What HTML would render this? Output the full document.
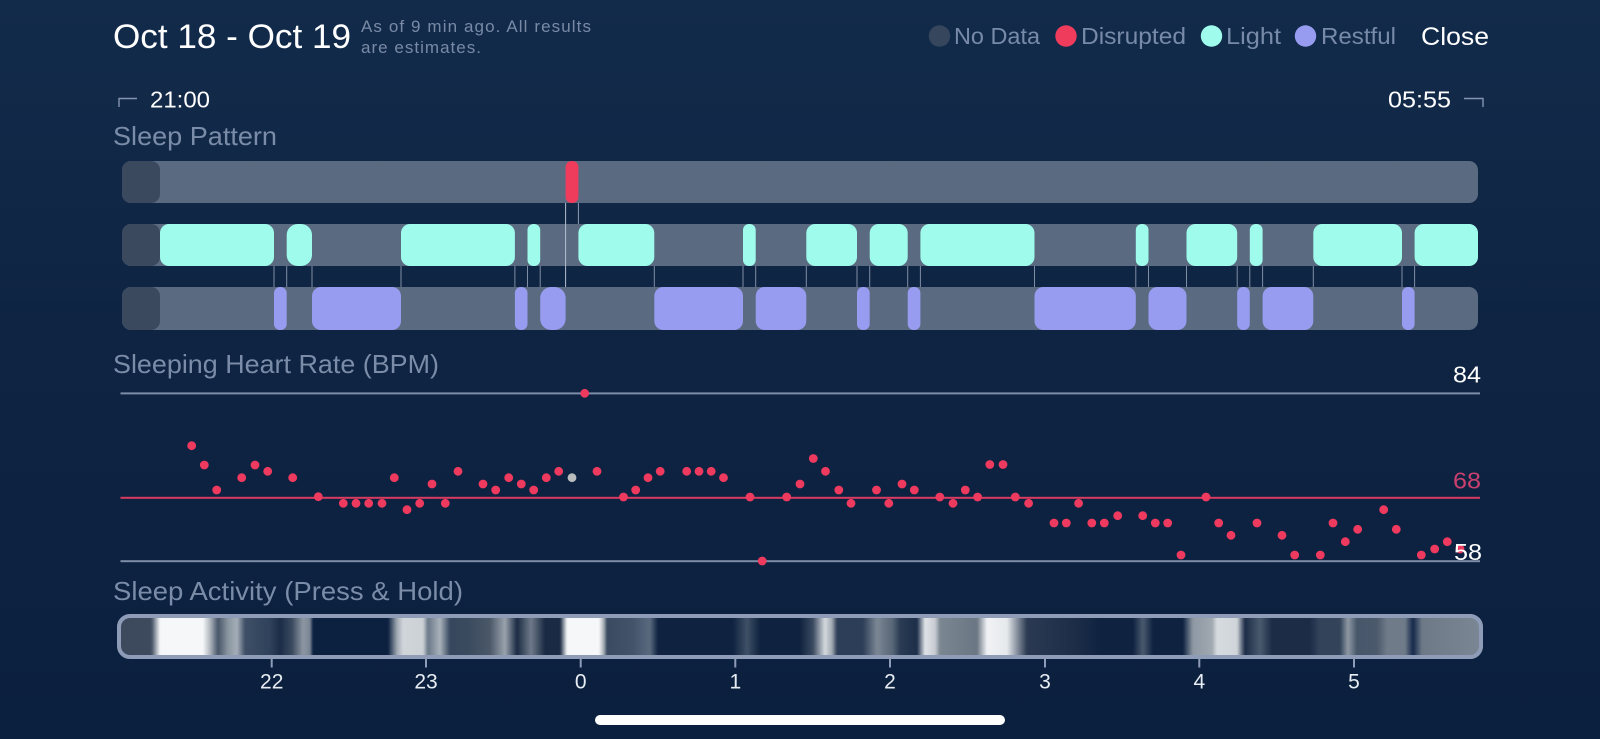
<!DOCTYPE html>
<html><head><meta charset="utf-8"><title>Sleep</title>
<style>
html,body{margin:0;padding:0;width:1600px;height:739px;overflow:hidden;background:#0c2140}
#s{position:absolute;left:0;top:0}
#gw{position:absolute;left:0;top:614px;width:1600px;height:45px;overflow:hidden;clip-path:inset(0 117px 0 117px round 13px)}
#grad{position:absolute;left:0;top:-5px;width:1600px;height:55px;filter:blur(.8px);
background:linear-gradient(90deg,#3d4a5e 0,#3d4a5e 150px,#4a5668 152px,#f5f7f8 160px,#f5f7f8 203px,#b0b6be 210px,#475569 218px,#8a95a0 228px,#a4aeb8 237px,#3e4f66 245px,#2f425b 270px,#1b2c47 280px,#3a4a5e 292px,#8d97a3 303px,#7a8594 310px,#0c2140 313px,#0c2140 388px,#a0a8b2 397px,#d0d5da 403px,#ccd1d6 423px,#6a7888 428px,#a9b2bb 440px,#36475e 450px,#3a4a5e 467px,#4a5868 490px,#9aa3ad 505px,#1a2a44 517px,#6f7b89 531px,#1a2a44 545px,#1a2a44 560px,#f5f7f8 567px,#f5f7f8 599px,#a0a8b0 604px,#3a4a60 607px,#43536a 633px,#5a6a7e 650px,#0f2340 658px,#0f2340 733px,#3f5066 747px,#0f2340 760px,#0f2340 800px,#3a4a60 813px,#d6dadf 825px,#a0a8b0 832px,#2d3f58 837px,#2d3f58 863px,#7b8794 877px,#566476 893px,#2a3b53 900px,#1d2e49 917px,#e0e3e7 925px,#c8cdd2 935px,#7a8691 940px,#6a7683 977px,#f0f2f4 987px,#e6e9ec 1007px,#2b3a52 1027px,#1c2c47 1077px,#0f2340 1100px,#0f2340 1133px,#4a5a6e 1143px,#0f2340 1153px,#0f2340 1183px,#8f99a4 1193px,#a0a8b0 1212px,#d6dbe0 1217px,#d0d5da 1237px,#1b2c47 1245px,#4a5a6e 1260px,#1c2c47 1272px,#1c2c47 1310px,#33445a 1320px,#33445a 1340px,#8f99a4 1348px,#47566a 1357px,#4b596b 1377px,#6f7b89 1387px,#6f7b89 1405px,#14284a 1413px,#6d7987 1422px,#7a8694 1480px)}
#bd{position:absolute;left:117px;top:614px;width:1358px;height:37px;border:4px solid #8e9cb8;border-radius:13px}
</style></head><body>
<svg id="s" width="1600" height="739" viewBox="0 0 1600 739" xmlns="http://www.w3.org/2000/svg" font-family="'Liberation Sans',sans-serif">
<defs><linearGradient id="bg" x1="0" y1="0" x2="0" y2="1"><stop offset="0" stop-color="#132b4b"/><stop offset=".45" stop-color="#0e2442"/><stop offset="1" stop-color="#0b203e"/></linearGradient></defs>
<rect width="1600" height="739" fill="url(#bg)"/>

<text x="113" y="48" font-size="34" fill="#fff" textLength="238" lengthAdjust="spacingAndGlyphs">Oct 18 - Oct 19</text>
<text x="361" y="32" font-size="17" fill="#788aa5" textLength="230" lengthAdjust="spacing">As of 9 min ago. All results</text>
<text x="361" y="53" font-size="17" fill="#788aa5" textLength="120" lengthAdjust="spacing">are estimates.</text>

<circle cx="939.5" cy="36" r="10.7" fill="#36465c"/>
<text x="954" y="44" font-size="23" fill="#778aa8" textLength="86" lengthAdjust="spacingAndGlyphs">No Data</text>
<circle cx="1066" cy="36" r="10.7" fill="#ef3c5c"/>
<text x="1081" y="44" font-size="23" fill="#778aa8" textLength="105" lengthAdjust="spacingAndGlyphs">Disrupted</text>
<circle cx="1211.5" cy="36" r="10.7" fill="#9ffcec"/>
<text x="1226" y="44" font-size="23" fill="#778aa8" textLength="55" lengthAdjust="spacingAndGlyphs">Light</text>
<circle cx="1305.5" cy="36" r="10.7" fill="#979cf0"/>
<text x="1321" y="44" font-size="23" fill="#778aa8" textLength="75" lengthAdjust="spacingAndGlyphs">Restful</text>
<text x="1421" y="45" font-size="25" fill="#fff" textLength="68" lengthAdjust="spacingAndGlyphs">Close</text>

<path d="M119 107V98.5H137" fill="none" stroke="#8494b0" stroke-width="1.4"/>
<text x="150" y="107.5" font-size="23" fill="#fff" textLength="60" lengthAdjust="spacingAndGlyphs">21:00</text>
<text x="1388" y="107.5" font-size="23" fill="#fff" textLength="63" lengthAdjust="spacingAndGlyphs">05:55</text>
<path d="M1464 98.5H1483V107" fill="none" stroke="#8494b0" stroke-width="1.4"/>

<text x="113" y="145" font-size="26" fill="#7a8ca7" textLength="164" lengthAdjust="spacingAndGlyphs">Sleep Pattern</text>

<g fill="#5a6a80">
<rect x="122" y="161" width="1356" height="42" rx="9"/>
<rect x="122" y="224" width="1356" height="42" rx="9"/>
<rect x="122" y="287" width="1356" height="43" rx="9"/>
</g>
<g fill="#3a495d">
<rect x="122" y="161" width="38" height="42" rx="9"/>
<rect x="122" y="224" width="38" height="42" rx="9"/>
<rect x="122" y="287" width="38" height="43" rx="9"/>
</g>
<g fill="none" stroke-width="1">
<path d="M565.6 203V287" stroke="#b4bfce"/>
<path d="M578.4 203V224" stroke="#8d9bb0"/>
<path stroke="#7f8da3" d="M274 266V287M286.7 266V287M312 266V287M401 266V287M514.9 266V287M527.5 266V287M540.2 266V287M654.3 266V287M743 266V287M755.7 266V287M806.3 266V287M857 266V287M869.7 266V287M907.7 266V287M920.4 266V287M1034.5 266V287M1135.8 266V287M1148.5 266V287M1186.5 266V287M1237.2 266V287M1249.8 266V287M1262.6 266V287M1313.3 266V287M1402 266V287M1414.6 266V287"/>
</g>
<rect x="565.6" y="161" width="12.8" height="42" rx="6" fill="#ef3c5c"/>
<g fill="#9ffcec">
<rect x="160" y="224" width="114" height="42" rx="9"/>
<rect x="286.7" y="224" width="25.3" height="42" rx="11"/>
<rect x="401" y="224" width="113.9" height="42" rx="9"/>
<rect x="527.5" y="224" width="12.7" height="42" rx="6"/>
<rect x="578.4" y="224" width="75.9" height="42" rx="9"/>
<rect x="743" y="224" width="12.7" height="42" rx="6"/>
<rect x="806.3" y="224" width="50.7" height="42" rx="9"/>
<rect x="869.7" y="224" width="38" height="42" rx="9"/>
<rect x="920.4" y="224" width="114.1" height="42" rx="9"/>
<rect x="1135.8" y="224" width="12.7" height="42" rx="6"/>
<rect x="1186.5" y="224" width="50.7" height="42" rx="9"/>
<rect x="1249.8" y="224" width="12.8" height="42" rx="6"/>
<rect x="1313.3" y="224" width="88.7" height="42" rx="9"/>
<rect x="1414.6" y="224" width="63.4" height="42" rx="9"/>
</g>
<g fill="#979cf0">
<rect x="274" y="287" width="12.7" height="43" rx="6"/>
<rect x="312" y="287" width="89" height="43" rx="9"/>
<rect x="514.9" y="287" width="12.6" height="43" rx="6"/>
<rect x="540.2" y="287" width="25.4" height="43" rx="11"/>
<rect x="654.3" y="287" width="88.7" height="43" rx="9"/>
<rect x="755.7" y="287" width="50.6" height="43" rx="9"/>
<rect x="857" y="287" width="12.7" height="43" rx="6"/>
<rect x="907.7" y="287" width="12.7" height="43" rx="6"/>
<rect x="1034.5" y="287" width="101.3" height="43" rx="9"/>
<rect x="1148.5" y="287" width="38" height="43" rx="9"/>
<rect x="1237.2" y="287" width="12.6" height="43" rx="6"/>
<rect x="1262.6" y="287" width="50.7" height="43" rx="9"/>
<rect x="1402" y="287" width="12.6" height="43" rx="6"/>
</g>

<text x="113" y="373" font-size="26" fill="#7a8ca7" textLength="326" lengthAdjust="spacingAndGlyphs">Sleeping Heart Rate (BPM)</text>
<rect x="120.5" y="392.4" width="1359.5" height="2" fill="#7e8ea8"/>
<rect x="120.5" y="496.8" width="1359.5" height="2" fill="#d93a60"/>
<rect x="120.5" y="560.2" width="1359.5" height="2" fill="#7e8ea8"/>
<text x="1453" y="382.5" font-size="23" fill="#fff" textLength="28" lengthAdjust="spacingAndGlyphs">84</text>
<text x="1453" y="488.5" font-size="23" fill="#c9406e" textLength="28" lengthAdjust="spacingAndGlyphs">68</text>

<g fill="#ee3a5e">
<circle cx="191.7" cy="445.7" r="4.4"/><circle cx="204.3" cy="465" r="4.4"/><circle cx="216.7" cy="490" r="4.4"/><circle cx="241.7" cy="477.7" r="4.4"/><circle cx="255" cy="465" r="4.4"/><circle cx="267.7" cy="471.3" r="4.4"/><circle cx="292.7" cy="477.7" r="4.4"/><circle cx="318.3" cy="496.7" r="4.4"/><circle cx="343.3" cy="503.3" r="4.4"/><circle cx="356" cy="503.3" r="4.4"/><circle cx="368.7" cy="503.3" r="4.4"/><circle cx="382" cy="503.3" r="4.4"/><circle cx="394.3" cy="477.7" r="4.4"/><circle cx="407" cy="509.7" r="4.4"/><circle cx="419.7" cy="503.3" r="4.4"/><circle cx="432" cy="484" r="4.4"/><circle cx="445.3" cy="503.3" r="4.4"/><circle cx="458" cy="471.3" r="4.4"/><circle cx="483" cy="484" r="4.4"/><circle cx="495.7" cy="490" r="4.4"/><circle cx="508.7" cy="477.7" r="4.4"/><circle cx="521.3" cy="484" r="4.4"/><circle cx="533.7" cy="490" r="4.4"/><circle cx="546.3" cy="477.7" r="4.4"/><circle cx="558.7" cy="471.3" r="4.4"/><circle cx="584.7" cy="393.3" r="4.4"/><circle cx="597" cy="471.3" r="4.4"/>
<circle cx="623.5" cy="497" r="4.4"/><circle cx="635.7" cy="490" r="4.4"/><circle cx="648" cy="477.7" r="4.4"/><circle cx="660.2" cy="471.3" r="4.4"/><circle cx="686.7" cy="471.3" r="4.4"/><circle cx="699" cy="471.3" r="4.4"/><circle cx="711.2" cy="471.3" r="4.4"/><circle cx="723.5" cy="477.7" r="4.4"/><circle cx="750" cy="497" r="4.4"/><circle cx="762.2" cy="561" r="4.4"/><circle cx="786.7" cy="497" r="4.4"/><circle cx="800" cy="484" r="4.4"/><circle cx="813.3" cy="458.5" r="4.4"/><circle cx="825.5" cy="471.3" r="4.4"/><circle cx="838.8" cy="490" r="4.4"/><circle cx="851" cy="503.3" r="4.4"/><circle cx="876.5" cy="490" r="4.4"/><circle cx="888.8" cy="503.3" r="4.4"/><circle cx="902" cy="484" r="4.4"/><circle cx="914.3" cy="490" r="4.4"/><circle cx="939.8" cy="497" r="4.4"/><circle cx="953" cy="503.3" r="4.4"/><circle cx="965.3" cy="490" r="4.4"/><circle cx="977.6" cy="497" r="4.4"/><circle cx="989.8" cy="464.5" r="4.4"/><circle cx="1003" cy="464.5" r="4.4"/><circle cx="1015.3" cy="497" r="4.4"/><circle cx="1028.6" cy="503.3" r="4.4"/><circle cx="1054" cy="523" r="4.4"/><circle cx="1066.3" cy="523" r="4.4"/><circle cx="1078.6" cy="503.3" r="4.4"/><circle cx="1091.8" cy="523" r="4.4"/><circle cx="1104.3" cy="523" r="4.4"/><circle cx="1117.7" cy="515.7" r="4.4"/><circle cx="1142.7" cy="515.7" r="4.4"/><circle cx="1155.3" cy="523" r="4.4"/><circle cx="1167.7" cy="523" r="4.4"/><circle cx="1181" cy="555" r="4.4"/><circle cx="1206" cy="497" r="4.4"/><circle cx="1218.7" cy="523" r="4.4"/><circle cx="1231" cy="535.3" r="4.4"/><circle cx="1257" cy="523" r="4.4"/><circle cx="1282" cy="535.3" r="4.4"/><circle cx="1294.7" cy="555" r="4.4"/><circle cx="1320.3" cy="555" r="4.4"/><circle cx="1333" cy="523" r="4.4"/><circle cx="1345.3" cy="541.7" r="4.4"/><circle cx="1357.7" cy="529.3" r="4.4"/><circle cx="1383.7" cy="509.7" r="4.4"/><circle cx="1396.3" cy="529.3" r="4.4"/><circle cx="1421.3" cy="555" r="4.4"/><circle cx="1434.7" cy="549" r="4.4"/><circle cx="1447.3" cy="541.7" r="4.4"/><circle cx="1460" cy="549" r="4.4"/>
</g>
<circle cx="572" cy="477.7" r="4.4" fill="#b8bcbc"/>
<text x="1454" y="560" font-size="23" fill="#fff" textLength="28" lengthAdjust="spacingAndGlyphs">58</text>

<text x="113" y="600" font-size="26" fill="#7a8ca7" textLength="350" lengthAdjust="spacingAndGlyphs">Sleep Activity (Press &amp; Hold)</text>

<path d="M271.7 658V667.5M426 658V667.5M580.7 658V667.5M735.3 658V667.5M890 658V667.5M1045 658V667.5M1199.3 658V667.5M1354 658V667.5" stroke="#8e9cb8" stroke-width="2" fill="none"/>
<g font-size="21" fill="#e8edf3" text-anchor="middle">
<text x="271.7" y="688.5">22</text><text x="426" y="688.5">23</text><text x="580.7" y="688.5">0</text><text x="735.3" y="688.5">1</text><text x="890" y="688.5">2</text><text x="1045" y="688.5">3</text><text x="1199.3" y="688.5">4</text><text x="1354" y="688.5">5</text>
</g>
<rect x="595" y="715" width="410" height="10" rx="5" fill="#fff"/>
</svg>
<div id="gw"><div id="grad"></div></div>
<div id="bd"></div>
</body></html>
